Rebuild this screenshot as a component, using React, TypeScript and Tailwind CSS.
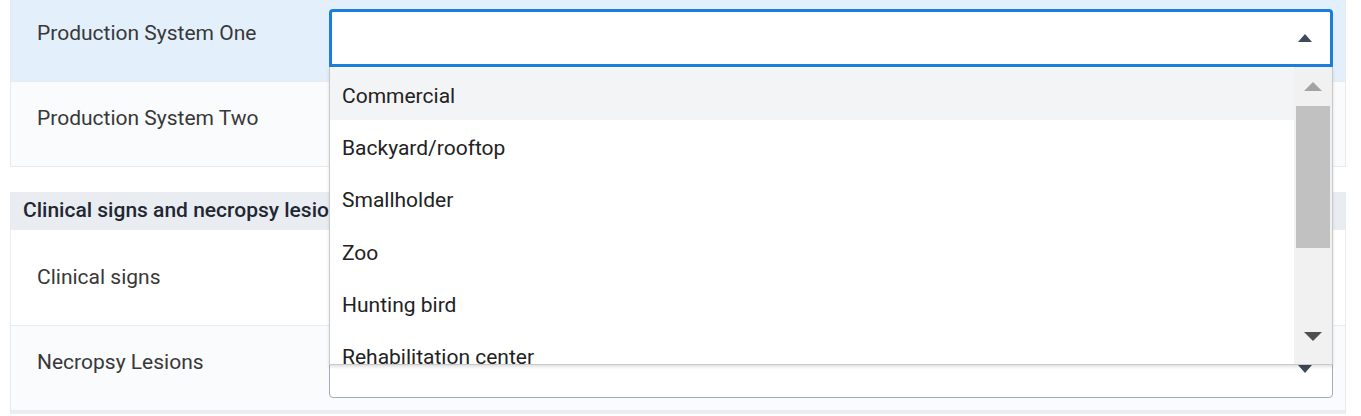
import React from 'react'

const OPTIONS = [
  'Commercial',
  'Backyard/rooftop',
  'Smallholder',
  'Zoo',
  'Hunting bird',
  'Rehabilitation center',
]

function Caret({ up, className }: { up?: boolean; className?: string }) {
  return (
    <svg width="14" height="8" viewBox="0 0 14 8" className={className}>
      {up ? <polygon points="0,8 14,8 7,0" fill="currentColor" /> : <polygon points="0,0 14,0 7,8" fill="currentColor" />}
    </svg>
  )
}

// fake scrollbar drawn as divs so it looks the same in every browser
function Scrollbar() {
  return (
    <div className="w-[38px] shrink-0 bg-[#f1f1f1] flex flex-col">
      <div className="h-[39px] flex items-center justify-center text-[#a3a3a3]">
        <svg width="18" height="9" viewBox="0 0 18 9">
          <polygon points="0,9 18,9 9,0" fill="currentColor" />
        </svg>
      </div>
      <div className="mx-[2px] h-[142px] bg-[#c1c1c1]" />
      <div className="flex-1" />
      <div className="h-[36px] flex items-start justify-center pt-[4px] text-[#505050]">
        <svg width="18" height="9" viewBox="0 0 18 9">
          <polygon points="0,0 18,0 9,9" fill="currentColor" />
        </svg>
      </div>
    </div>
  )
}

function Dropdown() {
  return (
    <div className="absolute left-0 right-0 top-full z-10 h-[298px] flex bg-white border-l border-r border-b border-[#c9c9c9] shadow-[0_2px_3px_rgba(0,0,0,0.12)]">
      <div className="flex-1 overflow-hidden pt-[1px]">
        {OPTIONS.map((o, i) => (
          <div
            key={o}
            className={
              'h-[52.3px] flex items-center pl-[12px] pt-[5px] text-[21px] text-[#222222] ' +
              (i === 0 ? 'bg-[#f3f4f6]' : 'bg-white')
            }
          >
            {o}
          </div>
        ))}
      </div>
      <Scrollbar />
    </div>
  )
}

function Select({ open }: { open?: boolean }) {
  if (open) {
    return (
      <div className="relative w-[1004px]">
        <div className="h-[58px] border-[3px] border-[#1a7fdb] rounded-t-[4px] bg-white flex items-center justify-end pr-[18px] text-[#3d4a5c]">
          <Caret up />
        </div>
        <Dropdown />
      </div>
    )
  }
  return (
    <div className="w-[1004px] h-[59px] border border-[#a3acb6] rounded-[4px] bg-white flex items-center justify-end pr-[20px] text-[#3d4a5c]">
      <Caret />
    </div>
  )
}

function Row({
  label,
  bg,
  height,
  labelTop,
  selectTop,
  open,
}: {
  label: string
  bg: string
  height: string
  labelTop: string
  selectTop: string
  open?: boolean
}) {
  return (
    <div className={'flex border-b border-[#e6ebf0] ' + bg + ' ' + height}>
      <div className={'w-[318px] shrink-0 pl-[26px] text-[21px] leading-[24px] text-[#383838] ' + labelTop}>
        {label}
      </div>
      <div className={selectTop}>
        <Select open={open} />
      </div>
    </div>
  )
}

export default function App() {
  return (
    <div className="min-h-[416px] bg-white pl-[10px] pr-[15px] font-['Roboto',sans-serif]">
      <div className="border-l border-r border-[#e6ebf0]">
        <Row label="Production System One" bg="bg-[#e3f0fc]" height="h-[82px]" labelTop="pt-[21px]" selectTop="pt-[9px] relative z-20" open />
        <Row label="Production System Two" bg="bg-[#f9fbfd]" height="h-[85px]" labelTop="pt-[24px]" selectTop="pt-[13px]" />
      </div>
      <div className="h-[25px]" />
      <div className="border-l border-r border-b-[3px] border-[#e6ebf0] border-b-[#eaeef2]">
        <div className="h-[38px] bg-[#e9edf1] flex items-center pl-[12px] text-[21px] font-medium text-[#1f2733]">
          Clinical signs and necropsy lesions
        </div>
        <Row label="Clinical signs" bg="bg-white" height="h-[96px]" labelTop="pt-[35px]" selectTop="pt-[18px]" />
        <Row label="Necropsy Lesions" bg="bg-[#f9fbfd]" height="h-[85px]" labelTop="pt-[24px]" selectTop="pt-[13px]" />
      </div>
    </div>
  )
}
